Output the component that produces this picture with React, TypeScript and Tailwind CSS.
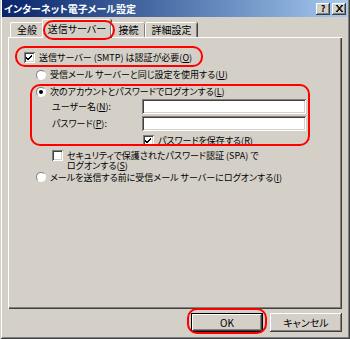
import React from 'react';

const raised =
  'shadow-[inset_-1px_-1px_0_#404040,inset_1px_1px_0_#ffffff,inset_-2px_-2px_0_#808080]';
const sunken =
  'shadow-[inset_1px_1px_0_#808080,inset_-1px_-1px_0_#ffffff,inset_2px_2px_0_#404040,inset_-2px_-2px_0_#d4d0c8]';

function Check({ checked }: { checked?: boolean }) {
  return (
    <span className={`w-[11px] h-[11px] bg-white shrink-0 flex items-center justify-center ${sunken}`}>
      {checked && (
        <svg width="7" height="7" viewBox="0 0 7 7">
          <path d="M0 3 L2 5 L6 1 M0 4 L2 6 L6 2" stroke="#000" strokeWidth="1" fill="none" />
        </svg>
      )}
    </span>
  );
}

function Radio({ checked }: { checked?: boolean }) {
  return (
    <span className="w-[10px] h-[10px] rounded-full bg-white shrink-0 flex items-center justify-center border border-t-[#808080] border-l-[#808080] border-r-white border-b-white">
      {checked && <span className="w-[4px] h-[4px] rounded-full bg-black" />}
    </span>
  );
}

function Key({ k }: { k: string }) {
  return (
    <>
      (<span className="underline">{k}</span>)
    </>
  );
}

export default function App() {
  const tabs = [
    { name: '全般', w: 'w-[33px]' },
    { name: '送信サーバー', w: 'w-[69px]', active: true },
    { name: '接続', w: 'w-[34px]' },
    { name: '詳細設定', w: 'w-[52px]' },
  ];

  return (
    <div
      className="relative w-[350px] h-[339px] bg-[#d4d0c8] text-black text-[9px] leading-none [font-feature-settings:'palt'] shadow-[inset_1px_0_0_#d4d0c8,inset_-1px_-1px_0_#404040,inset_2px_0_0_#ffffff,inset_-2px_-2px_0_#808080]"
      style={{ fontFamily: '"Noto Sans CJK JP", "MS UI Gothic", sans-serif' }}
    >
      {/* title bar */}
      <div className="mx-[2px] h-[17px] flex items-center pl-[2px] pr-[2px] bg-gradient-to-r from-[#0a246a] to-[#a6caf0]">
        <span className="text-white font-bold text-[10px] flex-1">インターネット電子メール設定</span>
        <div className="flex gap-[2px]">
          <span className={`w-[14px] h-[12px] bg-[#d4d0c8] flex items-center justify-center font-bold text-[9px] ${raised}`}>?</span>
          <span className={`w-[14px] h-[12px] bg-[#d4d0c8] flex items-center justify-center ${raised}`}>
            <svg width="8" height="7" viewBox="0 0 8 7">
              <path d="M1 0 L7 7 M7 0 L1 7 M2 0 L8 7 M8 0 L2 7" stroke="#000" strokeWidth="1" />
            </svg>
          </span>
        </div>
      </div>

      {/* tabs */}
      <div className="flex items-end h-[18px] pl-[10px] mt-[2px] relative z-10 text-[10px]">
        {tabs.map((t) =>
          t.active ? (
            <div
              key={t.name}
              className={`${t.w} -ml-[1px] h-[19px] mb-[-1px] bg-[#d4d0c8] rounded-t-[2px] flex items-center justify-center border-l border-t border-white shadow-[inset_-1px_0_0_#808080,1px_0_0_#404040]`}
            >
              {t.name}
            </div>
          ) : (
            <div
              key={t.name}
              className={`${t.w} h-[15px] rounded-t-[2px] flex items-center justify-center border-l border-t border-white shadow-[inset_-1px_0_0_#808080,1px_0_0_#404040]`}
            >
              {t.name}
            </div>
          )
        )}
      </div>

      {/* panel */}
      <div className="mx-[8px] h-[272px] border-l border-t border-white shadow-[inset_-1px_-1px_0_#404040,inset_-2px_-2px_0_#808080] pl-[15px] pt-[11px]">
        <div className="h-[17px] flex items-center gap-[4px]">
          <Check checked />
          <span>送信サーバー (SMTP) は認証が必要<Key k="O" /></span>
        </div>
        <div className="h-[17px] flex items-center gap-[4px] pl-[12px]">
          <Radio />
          <span>受信メール サーバーと同じ設定を使用する<Key k="U" /></span>
        </div>
        <div className="h-[17px] flex items-center gap-[4px] pl-[12px]">
          <Radio checked />
          <span>次のアカウントとパスワードでログオンする<Key k="L" /></span>
        </div>
        <div className="h-[15px] mt-[-1px] flex items-center pl-[28px]">
          <span className="w-[90px]">ユーザー名<Key k="N" />:</span>
          <span className={`w-[164px] h-[15px] bg-white ${sunken}`} />
        </div>
        <div className="h-[15px] mt-[2px] flex items-center pl-[28px]">
          <span className="w-[90px]">パスワード<Key k="P" />:</span>
          <span className={`w-[164px] h-[15px] bg-white ${sunken}`} />
        </div>
        <div className="h-[17px] mt-[1px] flex items-center gap-[4px] pl-[119px]">
          <Check checked />
          <span>パスワードを保存する<Key k="R" /></span>
        </div>
        <div className="mt-[2px] flex items-start gap-[4px] pl-[28px]">
          <span className="mt-[-1px]">
            <Check />
          </span>
          <span className="leading-[10px]">
            セキュリティで保護されたパスワード認証 (SPA) で
            <br />
            ログオンする<Key k="S" />
          </span>
        </div>
        <div className="h-[10px] mt-[1px] flex items-center gap-[4px] pl-[12px]">
          <Radio />
          <span>メールを送信する前に受信メール サーバーにログオンする<Key k="I" /></span>
        </div>
      </div>

      {/* buttons */}
      <div className="flex justify-end gap-[7px] pr-[8px] mt-[4px] text-[10px]">
        <div className="w-[72px] h-[19px] border border-black bg-[#d4d0c8] flex items-center justify-center shadow-[inset_-1px_-1px_0_#404040,inset_1px_1px_0_#ffffff,inset_-2px_-2px_0_#808080]">
          OK
        </div>
        <div className={`w-[72px] h-[19px] bg-[#d4d0c8] flex items-center justify-center ${raised}`}>キャンセル</div>
      </div>

      {/* red annotation marks */}
      <div className="absolute left-[43px] top-[20px] w-[72px] h-[20px] border-2 border-[#ff0000] rounded-[10px] z-20" />
      <div className="absolute left-[15px] top-[46px] w-[188px] h-[21px] border-2 border-[#ff0000] rounded-[10px] z-20" />
      <div className="absolute left-[30px] top-[84px] w-[280px] h-[62px] border-2 border-[#ff0000] rounded-[10px] z-20" />
      <div className="absolute left-[187px] top-[308px] w-[80px] h-[26px] border-2 border-[#ff0000] rounded-[10px] z-20" />
    </div>
  );
}
